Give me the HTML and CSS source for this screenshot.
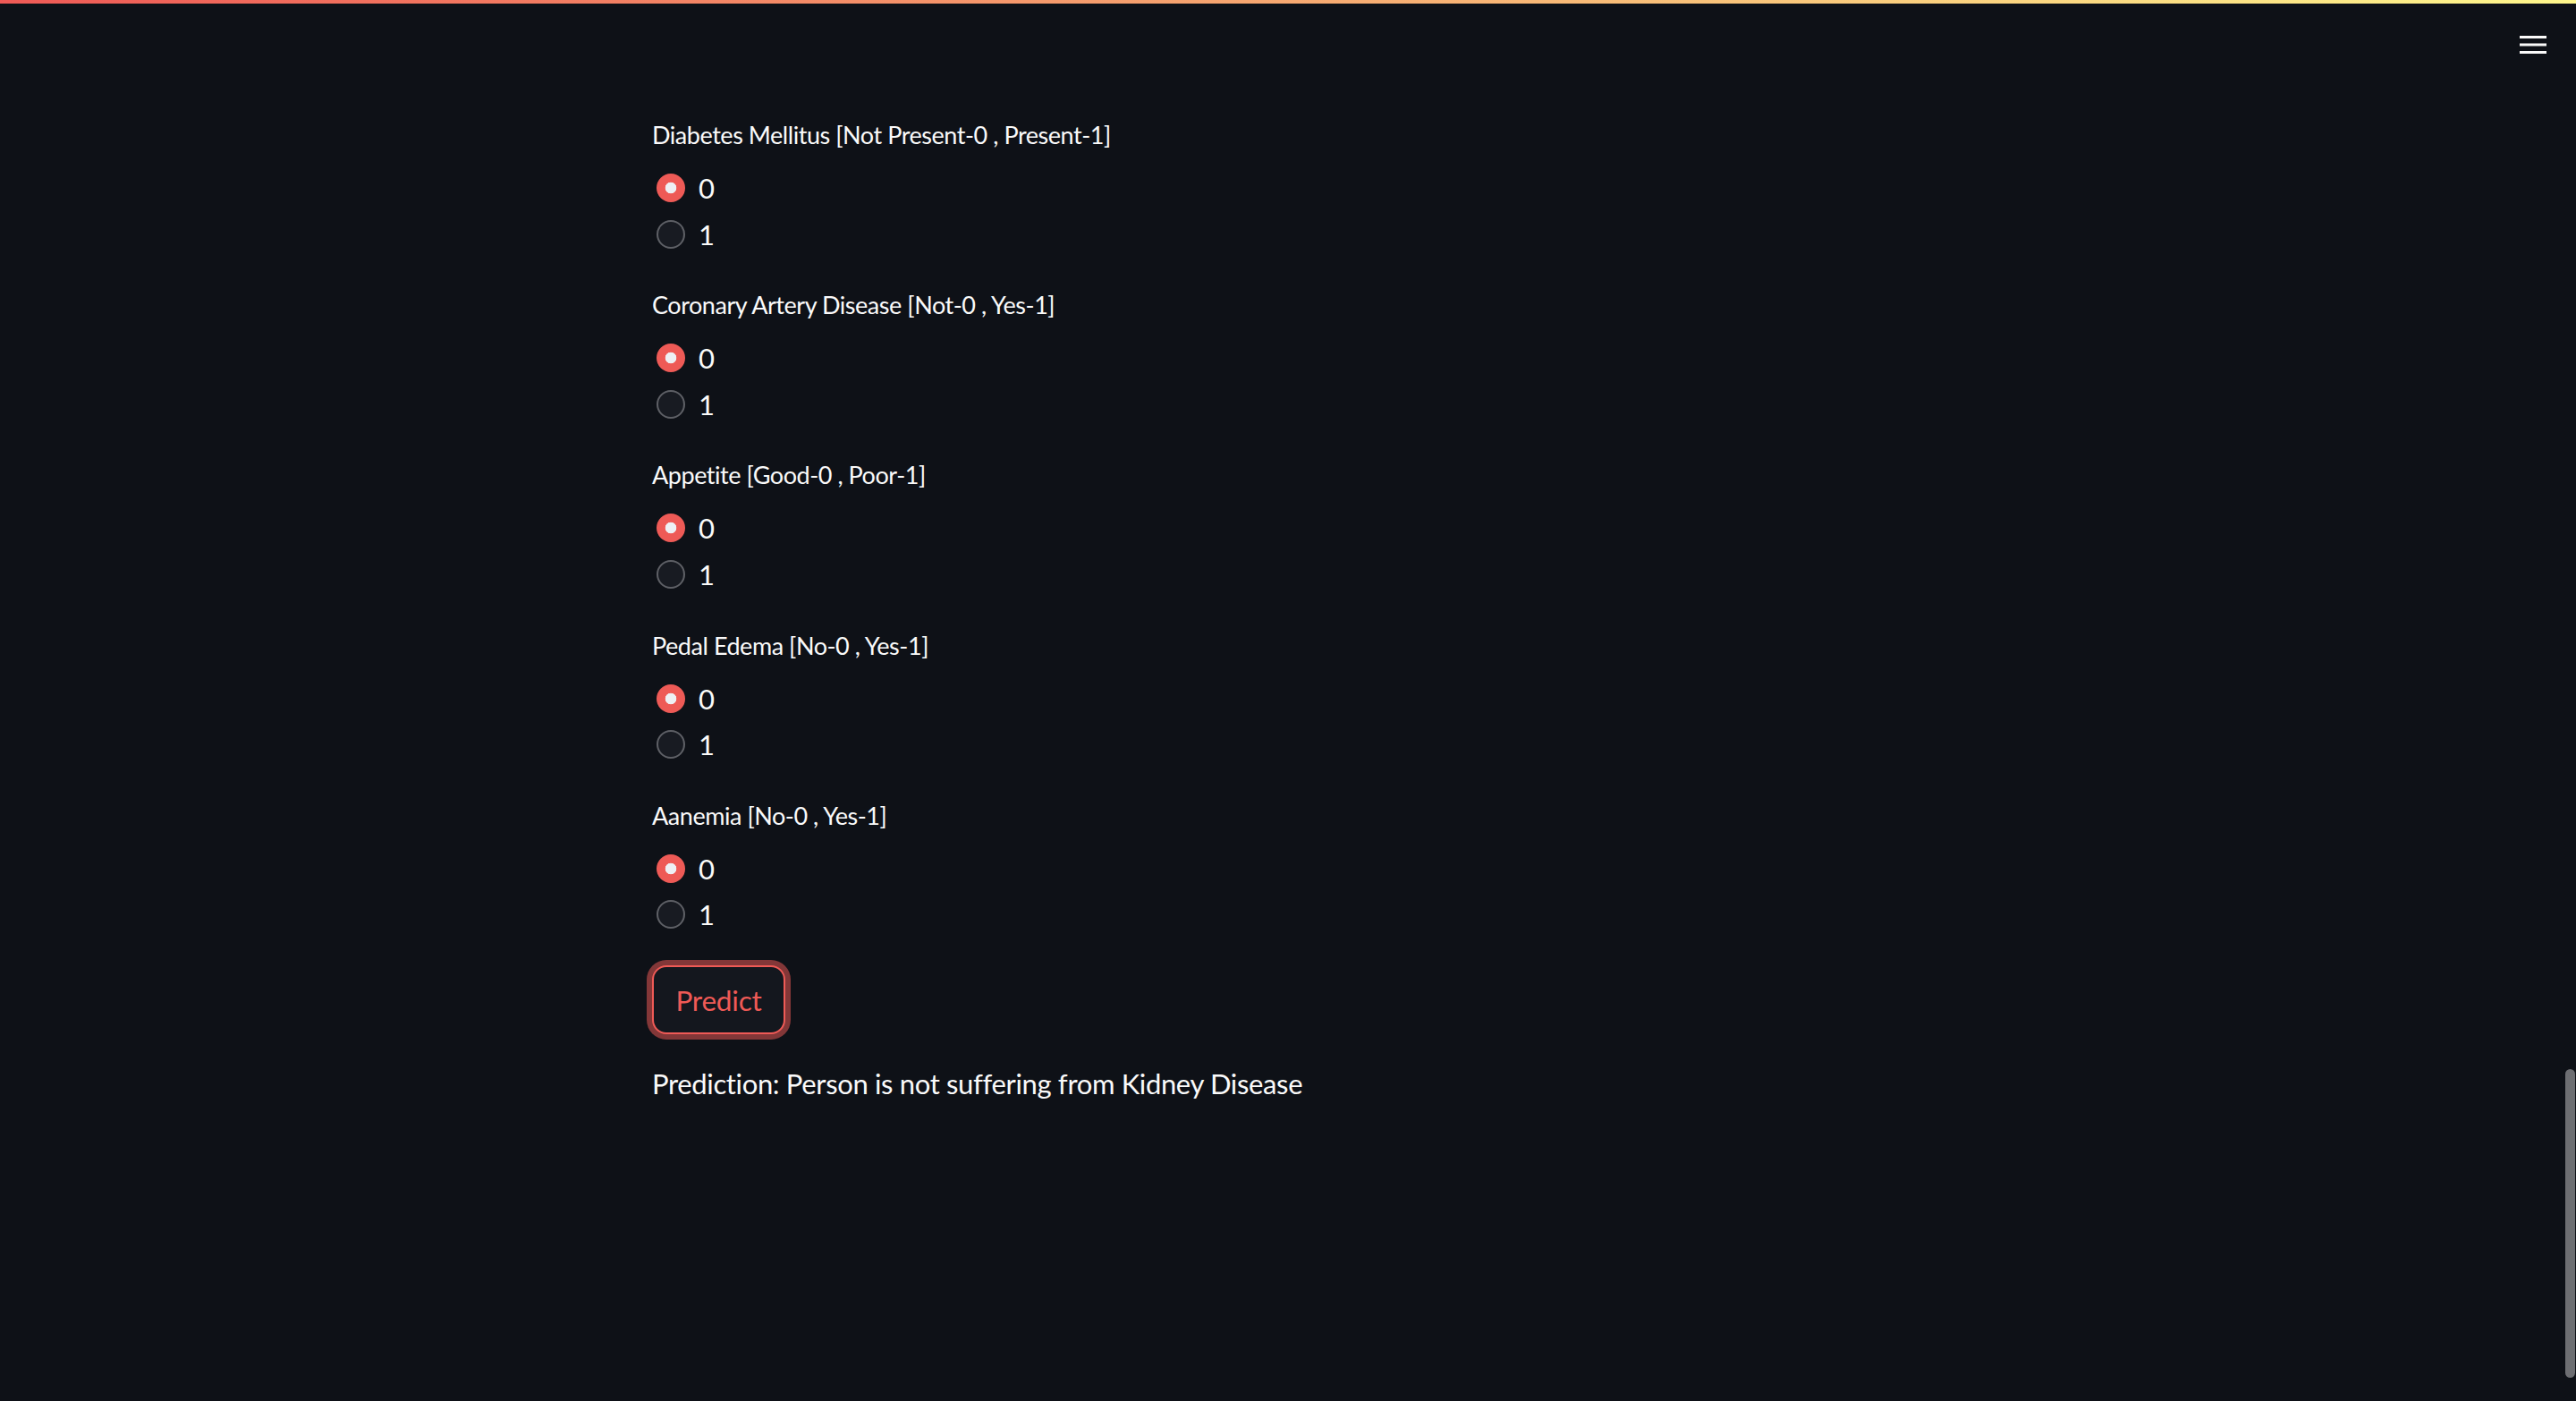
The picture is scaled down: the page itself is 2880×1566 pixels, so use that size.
FILE: index.html
```html
<!DOCTYPE html>
<html lang="en">
<head>
<meta charset="utf-8">
<title>Kidney Disease Prediction</title>
<link rel="stylesheet" href="styles.css">
</head>
<body>
<div class="decoration"></div>
<header class="toolbar">
  <button class="menu-btn" aria-label="Main menu">
    <svg width="30" height="20" viewBox="0 0 30 20"><rect x="0" y="0" width="30" height="3" fill="#fafafa"/><rect x="0" y="8.5" width="30" height="3" fill="#fafafa"/><rect x="0" y="17" width="30" height="3" fill="#fafafa"/></svg>
  </button>
</header>
<main class="main">
  <section class="radio-widget">
    <div class="widget-label">Diabetes Mellitus [Not Present-0 , Present-1]</div>
    <div class="radio-group">
      <label class="radio-option"><span class="radio-mark checked"></span><span class="radio-text">0</span></label>
      <label class="radio-option"><span class="radio-mark"></span><span class="radio-text">1</span></label>
    </div>
  </section>
  <section class="radio-widget">
    <div class="widget-label">Coronary Artery Disease [Not-0 , Yes-1]</div>
    <div class="radio-group">
      <label class="radio-option"><span class="radio-mark checked"></span><span class="radio-text">0</span></label>
      <label class="radio-option"><span class="radio-mark"></span><span class="radio-text">1</span></label>
    </div>
  </section>
  <section class="radio-widget">
    <div class="widget-label">Appetite [Good-0 , Poor-1]</div>
    <div class="radio-group">
      <label class="radio-option"><span class="radio-mark checked"></span><span class="radio-text">0</span></label>
      <label class="radio-option"><span class="radio-mark"></span><span class="radio-text">1</span></label>
    </div>
  </section>
  <section class="radio-widget">
    <div class="widget-label">Pedal Edema [No-0 , Yes-1]</div>
    <div class="radio-group">
      <label class="radio-option"><span class="radio-mark checked"></span><span class="radio-text">0</span></label>
      <label class="radio-option"><span class="radio-mark"></span><span class="radio-text">1</span></label>
    </div>
  </section>
  <section class="radio-widget">
    <div class="widget-label">Aanemia [No-0 , Yes-1]</div>
    <div class="radio-group">
      <label class="radio-option"><span class="radio-mark checked"></span><span class="radio-text">0</span></label>
      <label class="radio-option"><span class="radio-mark"></span><span class="radio-text">1</span></label>
    </div>
  </section>
  <div class="button-row">
    <button class="predict-btn">Predict</button>
  </div>
  <p class="result">Prediction: Person is not suffering from Kidney Disease</p>
</main>
<div class="scroll-thumb"></div>
</body>
</html>
```
FILE: styles.css
```css
html, body {
  margin: 0;
  padding: 0;
  background: #0e1117;
  color: #fafafa;
  font-family: "Lato", "Noto Sans", sans-serif;
  height: 100%;
  overflow: hidden;
}

.decoration {
  height: 4px;
  background: linear-gradient(90deg, #ef5a56, #fef78c);
}

.toolbar {
  display: flex;
  justify-content: flex-end;
  padding: 36px 33px 0 0;
  height: 21px;
}

.menu-btn {
  background: none;
  border: none;
  padding: 0;
  margin: 0;
  width: 30px;
  height: 20px;
  display: block;
}
.menu-btn svg { display: block; }

.main {
  width: 1424px;
  margin: 0 auto;
  padding-top: 70px;
  display: flex;
  flex-direction: column;
}

.radio-widget {
  display: flex;
  flex-direction: column;
  margin-bottom: 33.7px;
}

.widget-label {
  font-size: 27px;
  line-height: 40px;
  letter-spacing: -0.45px;
  margin-bottom: 13px;
  padding-left: 1px;
}

.radio-group {
  display: flex;
  flex-direction: column;
}

.radio-option {
  display: flex;
  align-items: center;
  height: 52px;
  padding-left: 6px;
}

.radio-option + .radio-option {
  margin-top: -0.5px;
}

.radio-mark {
  box-sizing: border-box;
  width: 32px;
  height: 32px;
  border-radius: 50%;
  border: 2px solid #5e6066;
  background: #181b22;
  margin-right: 15px;
  flex: none;
}

.radio-mark.checked {
  border: none;
  background: radial-gradient(circle, #eef0f4 0 6px, #ee5a56 6.6px);
}

.radio-text {
  font-size: 31px;
  line-height: 40px;
}

.button-row {
  display: flex;
  margin-top: -2.5px;
}

.predict-btn {
  box-sizing: border-box;
  width: 149px;
  height: 77px;
  margin-left: 1px;
  border: 2px solid #ef5a56;
  border-radius: 16px;
  background: #14171e;
  color: #ef5a56;
  font-family: "Lato", "Noto Sans", sans-serif;
  font-size: 31.5px;
  letter-spacing: -0.2px;
  padding: 0;
  box-shadow: 0 0 0 6px rgba(240, 90, 86, 0.52);
}

.result {
  margin: 35px 0 0;
  font-size: 31px;
  line-height: 40px;
  letter-spacing: -0.35px;
  padding-left: 1px;
}

.scroll-thumb {
  position: fixed;
  right: 1px;
  top: 1195px;
  width: 11px;
  height: 345px;
  border-radius: 6px;
  background: #6d6e72;
}
```
